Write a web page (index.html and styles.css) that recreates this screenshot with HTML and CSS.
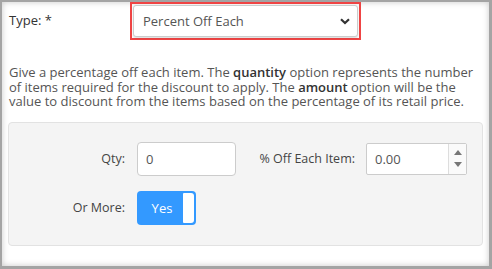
FILE: index.html
```html
<!DOCTYPE html>
<html lang="en">
  <head>
    <meta charset="UTF-8" />
    <meta name="viewport" content="width=device-width, initial-scale=1.0" />
    <title>Discount Type</title>
    <link rel="stylesheet" href="styles.css">
  </head>
  <body>
    <div id="frame">
      <div class="type-row">
        <label class="type-label">Type: *</label>
        <div class="highlight">
          <div class="select">
            <span>Percent Off Each</span>
            <svg width="10" height="7" viewBox="0 0 10 7">
              <path d="M1 1.2 L5 5 L9 1.2" fill="none" stroke="#333" stroke-width="2.2" />
            </svg>
          </div>
        </div>
      </div>

      <p class="help">
        Give a percentage off each item. The <b>quantity</b> option represents the number
        of items required for the discount to apply. The <b>amount</b> option will be the
        value to discount from the items based on the percentage of its retail price.
      </p>

      <div class="panel">
        <div class="row">
          <label class="label">Qty:</label>
          <div class="input qty">0</div>
          <label class="label label-off">% Off Each Item:</label>
          <div class="input spin">
            <span class="spin-value">0.00</span>
            <span class="spin-buttons">
              <svg width="8" height="5" viewBox="0 0 8 5"><path d="M0 5 L4 0 L8 5 Z" fill="#777" /></svg>
              <svg width="8" height="5" viewBox="0 0 8 5"><path d="M0 0 L4 5 L8 0 Z" fill="#777" /></svg>
            </span>
          </div>
        </div>
        <div class="row">
          <label class="label">Or More:</label>
          <div class="toggle">
            <span class="toggle-text">Yes</span>
            <span class="knob"></span>
          </div>
        </div>
      </div>
    </div>
  </body>
</html>
```

FILE: styles.css
```css
* {
  box-sizing: border-box;
}

html {
  font-family: "Open Sans", sans-serif;
  font-size: 13px;
}

body {
  margin: 0;
  background: #fff;
}

#frame {
  width: 492px;
  height: 269px;
  border: 2px solid #a4a4a4;
  border-bottom-width: 3px;
  border-right-width: 3px;
  box-shadow: inset 0 0 6px rgba(0, 0, 0, 0.22);
  padding: 0 6px 0 7px;
  color: #555;
}

.type-row {
  display: flex;
  align-items: flex-start;
}

.type-label {
  width: 121px;
  padding-top: 9px;
  color: #333;
}

.highlight {
  width: 231px;
  height: 38px;
  border: 2px solid #ef4444;
  padding: 1px;
}

.select {
  height: 32px;
  border: 1px solid #ccc;
  border-radius: 3px;
  box-shadow: 0 1px 2px rgba(0, 0, 0, 0.15);
  display: flex;
  align-items: center;
  justify-content: space-between;
  padding: 0 7px 0 9px;
  background: #fff;
}

.help {
  margin: 25px 0 0;
  line-height: 14.6px;
}

.help b {
  font-weight: 600;
  color: #333;
}

.panel {
  margin: 13px 0 0 -1px;
  width: 475px;
  height: 124px;
  background: #f4f4f4;
  border: 1px solid #e2e2e2;
  border-radius: 4px;
  padding: 19px 0 0;
  display: flex;
  flex-direction: column;
  gap: 15px;
}

.row {
  display: flex;
  align-items: center;
}

.label {
  width: 116px;
  text-align: right;
  margin-right: 12px;
  color: #444;
  font-size: 12.5px;
}

.label-off {
  width: 119px;
  margin-right: 11px;
}

.input {
  height: 34px;
  background: #fff;
  border: 1px solid #ccc;
  border-radius: 4px;
  display: flex;
  align-items: center;
}

.qty {
  width: 99px;
  padding-left: 8px;
}

.spin {
  width: 101px;
  height: 32px;
  border-radius: 2px;
  justify-content: space-between;
}

.spin-value {
  padding-left: 8px;
}

.spin-buttons {
  width: 18px;
  height: 100%;
  border-left: 1px solid #ddd;
  display: flex;
  flex-direction: column;
  align-items: center;
  justify-content: space-evenly;
  background: #fafafa;
}

.toggle {
  width: 59px;
  height: 34px;
  background: #3399ff;
  border-radius: 4px;
  display: flex;
  align-items: center;
  padding: 2px;
}

.toggle-text {
  flex: 1;
  text-align: center;
  color: #fff;
  padding-left: 2px;
}

.knob {
  width: 11px;
  height: 100%;
  background: #fff;
  border-radius: 1px 3px 3px 1px;
}
```
